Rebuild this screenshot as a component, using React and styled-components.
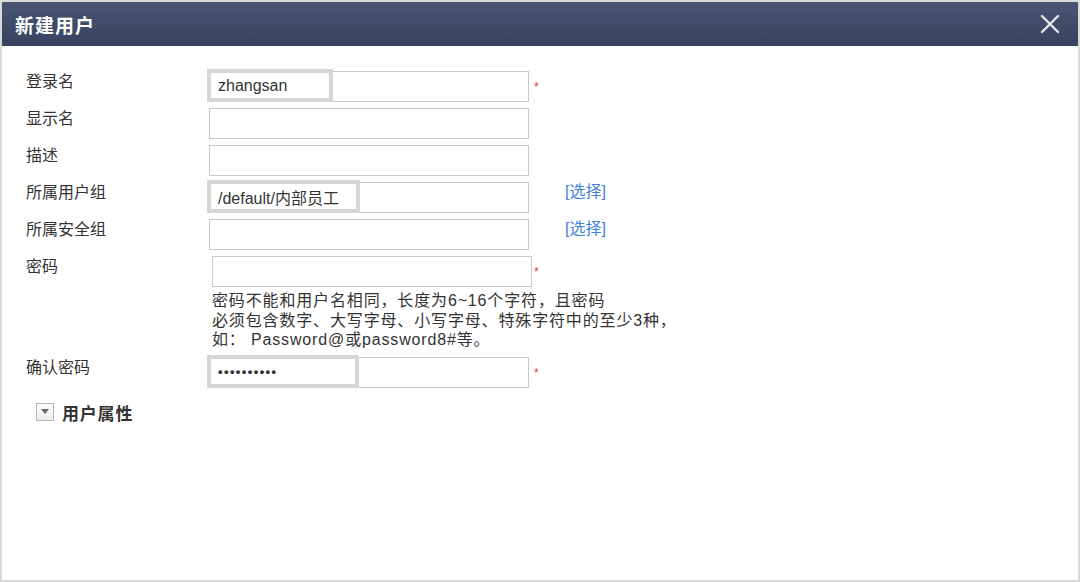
import React from 'react';
import styled, {createGlobalStyle} from 'styled-components';

const GlobalStyle = createGlobalStyle`
  html, body {
    margin: 0;
    padding: 0;
    background: white;
  }
  body {
    font-family: "Liberation Sans", "Noto Sans CJK SC", sans-serif;
    color: #333;
  }
`;

const Dialog = styled.div`
  box-sizing: border-box;
  width: 1080px;
  height: 582px;
  border: 2px solid #dadada;
  background: white;
  display: flex;
  flex-direction: column;
`;

const Header = styled.div`
  height: 44px;
  flex-shrink: 0;
  display: flex;
  align-items: center;
  justify-content: space-between;
  padding: 0 17px 0 13px;
  background: linear-gradient(#4a5573, #38425e);
`;

const Title = styled.div`
  color: white;
  font-size: 19px;
  font-weight: bold;
  letter-spacing: 1px;
`;

const CloseButton = styled.div`
  width: 22px;
  height: 22px;
  display: flex;
  align-items: center;
  justify-content: center;
  cursor: pointer;
`;

const Form = styled.div`
  padding: 25px 0 0 24px;
  display: flex;
  flex-direction: column;
`;

const Row = styled.div`
  display: flex;
  align-items: flex-start;
  margin-bottom: 6px;
`;

const Label = styled.div`
  width: 183px;
  font-size: 16px;
  line-height: 22px;
  color: #333;
`;

const InputBox = styled.div`
  position: relative;
  box-sizing: border-box;
  width: 320px;
  height: 31px;
  margin-left: ${props => props.shift || 0}px;
  border: 1px solid #c9c9c9;
  background: white;
`;

const Filled = styled.div`
  position: absolute;
  top: -3px;
  left: -3px;
  bottom: -1px;
  width: ${props => props.w}px;
  box-sizing: border-box;
  border: 4px solid #d6d6d6;
  background: white;
  display: flex;
  align-items: center;
  padding-left: 7px;
  font-size: 16px;
  color: #333;
  white-space: nowrap;
`;

const Dots = styled.span`
  font-size: 13px;
  letter-spacing: 1.4px;
  font-weight: bold;
`;

const Required = styled.span`
  color: #e23b3b;
  font-size: 12px;
  margin: 9px 0 0 ${props => 5 - (props.shift || 0)}px;
`;

const SelectLink = styled.a`
  margin-left: 36px;
  font-size: 16px;
  line-height: 20px;
  color: #3f7fd6;
  text-decoration: none;
  cursor: pointer;
`;

const Hint = styled.div`
  margin: -2px 0 7px 186px;
  font-size: 16px;
  line-height: 19.5px;
  letter-spacing: 0.85px;
  color: #333;
`;

const Toggle = styled.div`
  display: flex;
  align-items: center;
  margin: 6px 0 0 10px;
  cursor: pointer;
`;

const ToggleIcon = styled.span`
  box-sizing: border-box;
  width: 18px;
  height: 18px;
  border: 1px solid #b5b5b5;
  background: linear-gradient(#ffffff, #ececec);
  display: flex;
  align-items: center;
  justify-content: center;
  margin-right: 8px;
`;

const ToggleText = styled.span`
  font-size: 17px;
  font-weight: bold;
  color: #333;
  letter-spacing: 0.8px;
`;

const Field = ({label, value, filledWidth, required, link, shift}) => (
    <Row>
        <Label>{label}</Label>
        <InputBox shift={shift}>
            {value && <Filled w={filledWidth}>{value}</Filled>}
        </InputBox>
        {required && <Required shift={shift}>*</Required>}
        {link && <SelectLink>[选择]</SelectLink>}
    </Row>
);

const App = () => {
    return (
        <>
            <GlobalStyle/>
            <Dialog>
                <Header>
                    <Title>新建用户</Title>
                    <CloseButton>
                        <svg width="20" height="20" viewBox="0 0 20 20">
                            <path d="M2 2 L18 18 M18 2 L2 18" stroke="#e6e8ee" strokeWidth="2.4" strokeLinecap="round"/>
                        </svg>
                    </CloseButton>
                </Header>
                <Form>
                    <Field label="登录名" value="zhangsan" filledWidth={126} required/>
                    <Field label="显示名"/>
                    <Field label="描述"/>
                    <Field label="所属用户组" value="/default/内部员工" filledWidth={153} link/>
                    <Field label="所属安全组" link/>
                    <Field label="密码" required shift={3}/>
                    <Hint>
                        密码不能和用户名相同，长度为6~16个字符，且密码<br/>
                        必须包含数字、大写字母、小写字母、特殊字符中的至少3种，<br/>
                        如： Password@或password8#等。
                    </Hint>
                    <Field label="确认密码" value={<Dots>••••••••••</Dots>} filledWidth={152} required/>
                    <Toggle>
                        <ToggleIcon>
                            <svg width="8" height="6" viewBox="0 0 8 6">
                                <path d="M0 0 L8 0 L4 5 Z" fill="#666"/>
                            </svg>
                        </ToggleIcon>
                        <ToggleText>用户属性</ToggleText>
                    </Toggle>
                </Form>
            </Dialog>
        </>
    );
};

export default App;
